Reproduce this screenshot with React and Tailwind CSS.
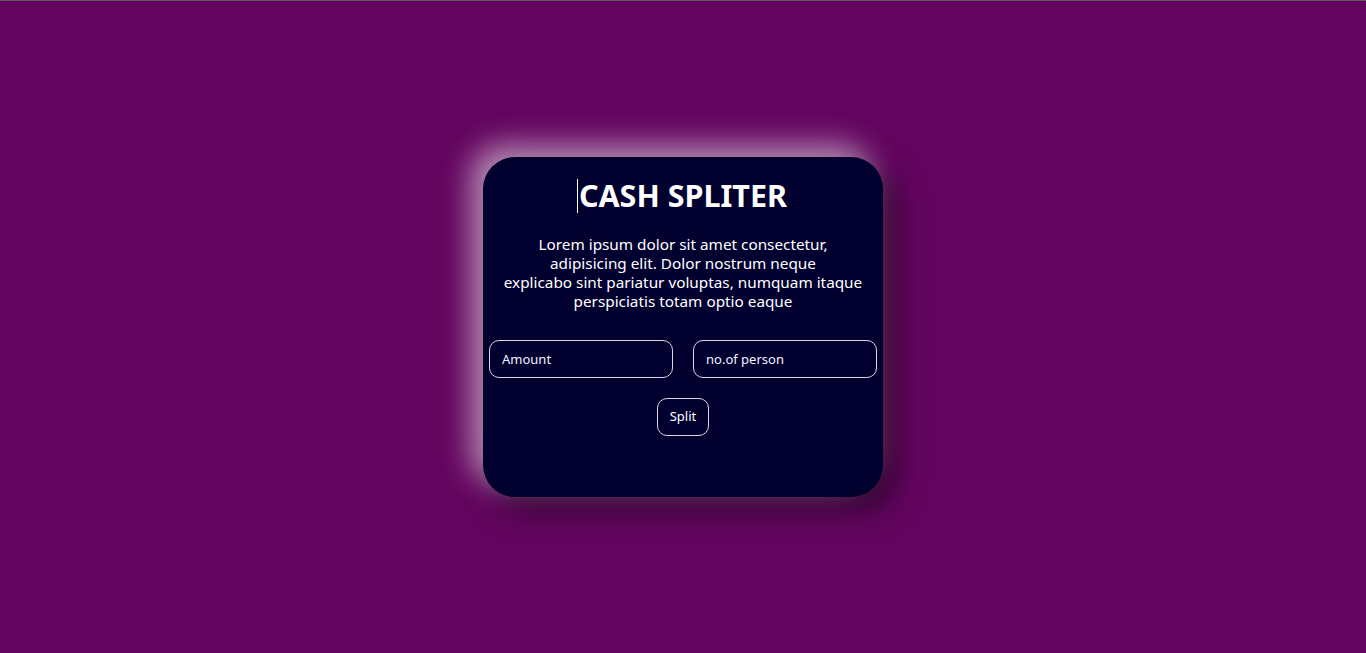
export default function App() {
  return (
    <div
      className="flex items-center justify-center h-[653px] w-full bg-[#63055f] border-t border-[#5a5a5a] overflow-hidden"
      style={{ fontFamily: '"Trebuchet MS", "Noto Sans", sans-serif' }}
    >
      <div className="flex flex-col items-center w-[400px] h-[340px] mt-[-1px] rounded-[32px] bg-[#01002f] px-[6px] pt-[20px] shadow-[-12px_-12px_30px_rgba(255,255,255,0.55),12px_12px_30px_rgba(0,0,0,0.55)]">
        <h1 className="relative text-[30.5px] leading-[36px] font-bold text-white">
          <span className="absolute left-[-2px] top-[2px] h-[34px] w-px bg-white" />
          CASH SPLITER
        </h1>
        <p className="mt-[22px] text-[15.3px] leading-[19px] text-white text-center">
          Lorem ipsum dolor sit amet consectetur,
          <br />
          adipisicing elit. Dolor nostrum neque
          <br />
          explicabo sint pariatur voluptas, numquam itaque
          <br />
          perspiciatis totam optio eaque
        </p>
        <div className="flex gap-[20px] mt-[29px] w-full">
          <input
            placeholder="Amount"
            className="w-[184px] h-[38px] rounded-[10px] border border-[#d8d8e0] bg-transparent px-[12px] text-[13px] text-white placeholder:text-[#f2f2ff] outline-none"
          />
          <input
            placeholder="no.of person"
            className="w-[184px] h-[38px] rounded-[10px] border border-[#d8d8e0] bg-transparent px-[12px] text-[13px] text-white placeholder:text-[#f2f2ff] outline-none"
          />
        </div>
        <button className="mt-[20px] w-[52px] h-[38px] rounded-[10px] border border-[#d8d8e0] bg-transparent text-[13px] text-white">
          Split
        </button>
      </div>
    </div>
  );
}
